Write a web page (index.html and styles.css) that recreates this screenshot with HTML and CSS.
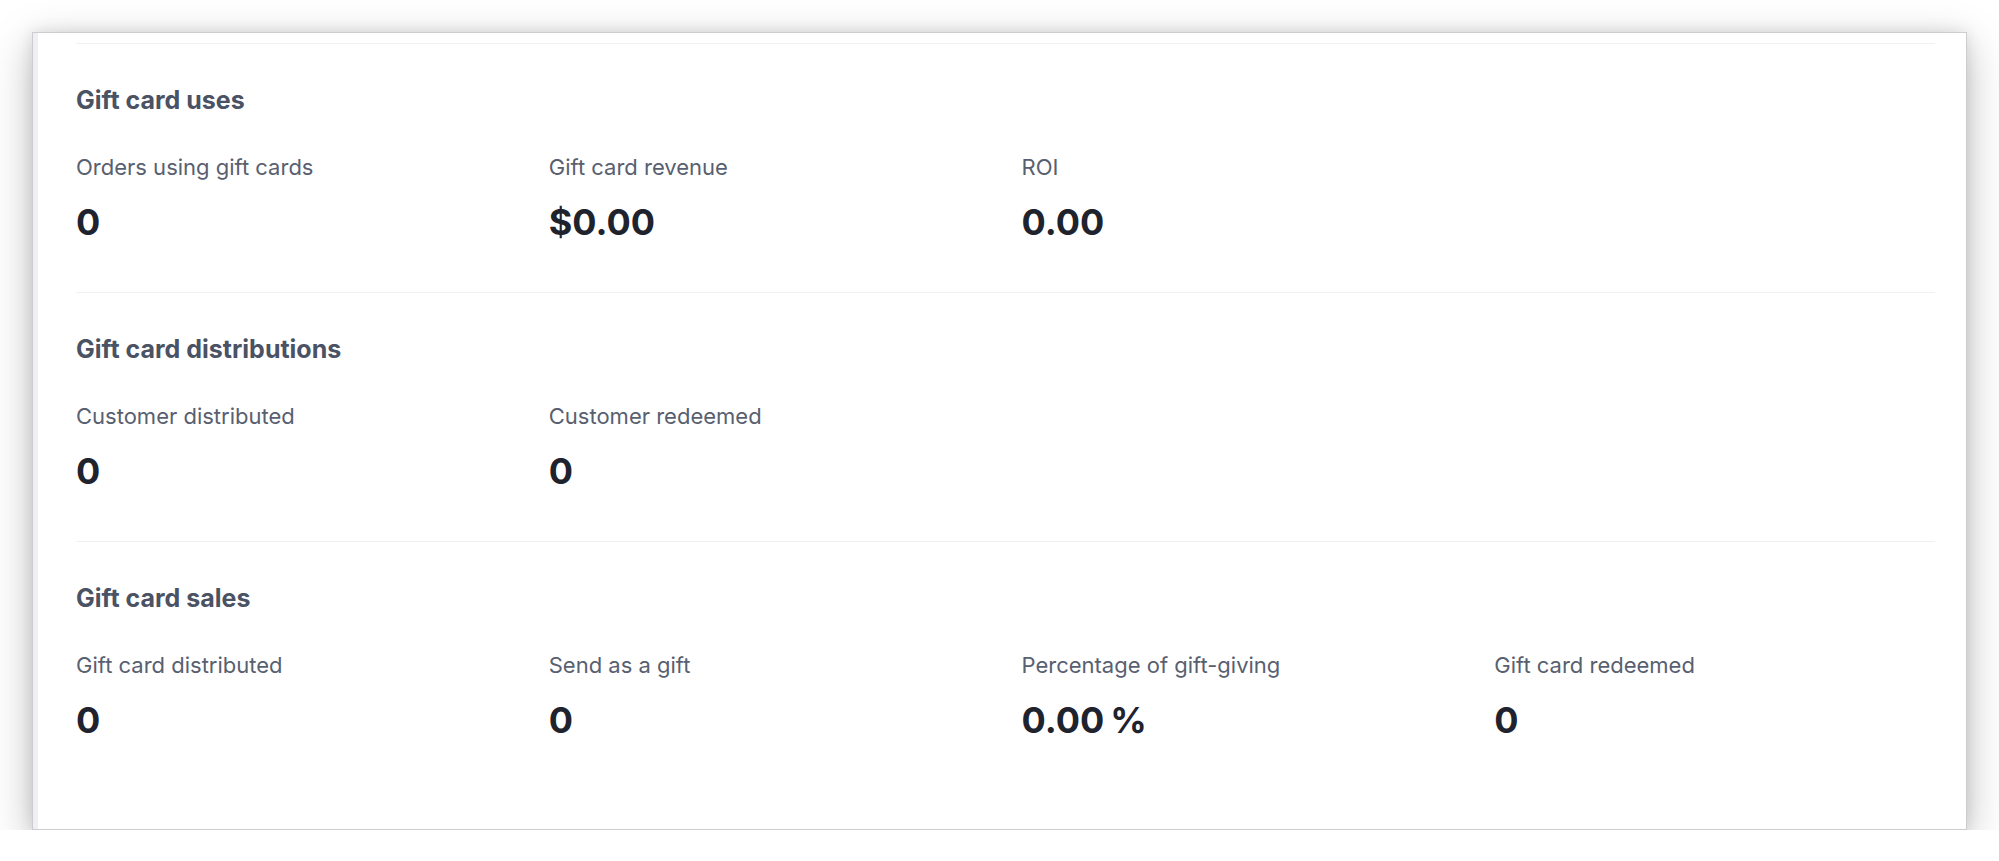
FILE: index.html
```html
<!DOCTYPE html>
<html lang="en">
<head>
<meta charset="utf-8">
<title>Gift card statistics</title>
<link rel="stylesheet" href="styles.css">
</head>
<body>
<div class="window">
  <div class="strip"></div>
  <div class="content">
    <section class="group">
      <h2 class="group-title">Gift card uses</h2>
      <div class="stats">
        <div class="stat"><div class="label">Orders using gift cards</div><div class="value">0</div></div>
        <div class="stat"><div class="label">Gift card revenue</div><div class="value">$0.00</div></div>
        <div class="stat"><div class="label">ROI</div><div class="value">0.00</div></div>
      </div>
    </section>
    <section class="group">
      <h2 class="group-title">Gift card distributions</h2>
      <div class="stats">
        <div class="stat"><div class="label">Customer distributed</div><div class="value">0</div></div>
        <div class="stat"><div class="label">Customer redeemed</div><div class="value">0</div></div>
      </div>
    </section>
    <section class="group">
      <h2 class="group-title">Gift card sales</h2>
      <div class="stats">
        <div class="stat"><div class="label">Gift card distributed</div><div class="value">0</div></div>
        <div class="stat"><div class="label">Send as a gift</div><div class="value">0</div></div>
        <div class="stat"><div class="label">Percentage of gift-giving</div><div class="value">0.00<span class="unit">%</span></div></div>
        <div class="stat"><div class="label">Gift card redeemed</div><div class="value">0</div></div>
      </div>
    </section>
  </div>
</div>
</body>
</html>
```

FILE: styles.css
```css
html, body {
  margin: 0;
  padding: 0;
  background: #ffffff;
}

body {
  padding: 32px 0 0 32px;
  font-family: Inter, "Noto Sans", "Liberation Sans", sans-serif;
  -webkit-font-smoothing: antialiased;
}

.window {
  width: 1935px;
  height: 798px;
  box-sizing: border-box;
  display: flex;
  background: #ffffff;
  border: 1px solid #cdcdcf;
  box-shadow: 0 12px 40px rgba(0, 0, 0, 0.26), 0 0 14px rgba(0, 0, 0, 0.1);
  overflow: hidden;
}

.strip {
  width: 5px;
  flex: none;
  background: #eff0f5;
}

.content {
  flex: 1;
  padding: 10px 31px 0 38px;
}

.group {
  border-top: 1px solid #eef0f3;
  padding: 40px 0 48px;
}

.group-title {
  margin: 0;
  font-size: 25px;
  line-height: 32px;
  font-weight: 700;
  color: #4a5263;
}

.stats {
  display: grid;
  grid-template-columns: repeat(4, 1fr);
  column-gap: 32px;
  margin-top: 36px;
}

.label {
  font-size: 22px;
  line-height: 30px;
  color: #586070;
}

.value {
  margin-top: 18px;
  font-size: 36px;
  line-height: 44px;
  font-weight: 700;
  color: #1f232e;
}

.unit {
  margin-left: 6px;
}
```
